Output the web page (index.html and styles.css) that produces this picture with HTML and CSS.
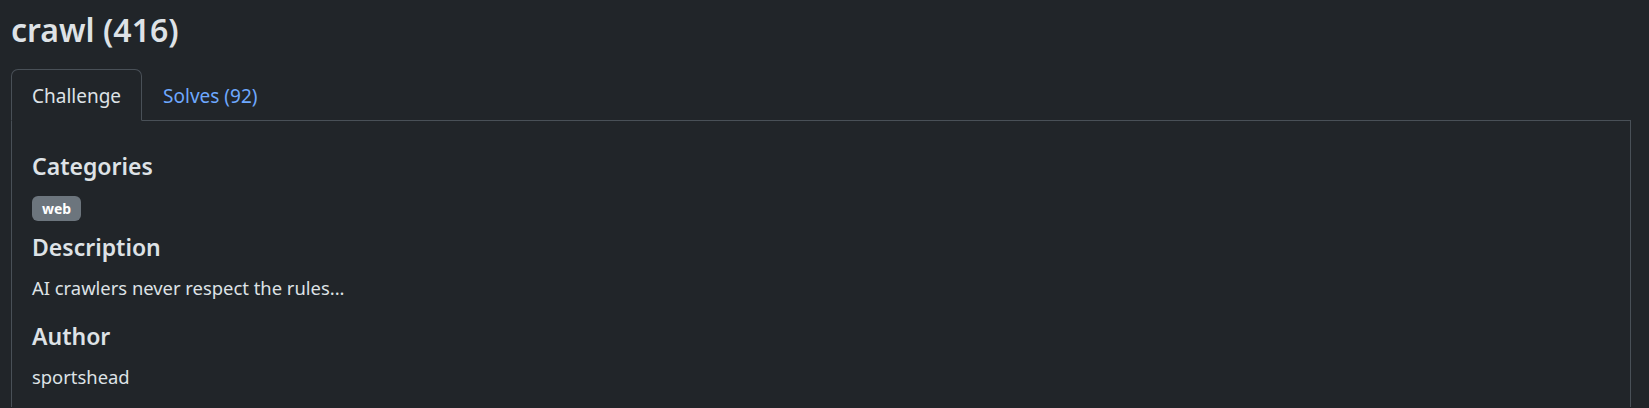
FILE: index.html
```html
<!DOCTYPE html>
<html lang="en">
<head>
<meta charset="utf-8">
<title>crawl</title>
<link rel="stylesheet" href="styles.css">
</head>
<body>
<div class="page">
  <h1 class="title">crawl (416)</h1>
  <ul class="tabs">
    <li class="tab active">Challenge</li>
    <li class="tab"><a href="#">Solves (92)</a></li>
  </ul>
  <div class="pane">
    <h5 class="heading">Categories</h5>
    <div class="badges"><span class="badge">web</span></div>
    <h5 class="heading">Description</h5>
    <p class="text">AI crawlers never respect the rules...</p>
    <h5 class="heading">Author</h5>
    <p class="text last">sportshead</p>
  </div>
</div>
</body>
</html>
```
FILE: styles.css
```css
html, body {
  margin: 0;
  background: #212529;
  color: #dee2e6;
  font-family: "Noto Sans", "Open Sans", sans-serif;
  font-size: 20px;
  line-height: 1.5;
}
.page {
  padding: 10px 18px 0 11px;
}
.title {
  margin: 0 0 20px;
  font-size: 32px;
  font-weight: 600;
  line-height: 39px;
}
.tabs {
  list-style: none;
  margin: 0;
  padding: 0;
  display: flex;
  border-bottom: 1px solid #495057;
}
.tab {
  padding: 12.4px 20px 9.1px;
  border: 1px solid transparent;
  border-top-left-radius: 7px;
  border-top-right-radius: 7px;
  margin-bottom: -1px;
  font-size: 19px;
  line-height: 28.5px;
}
.tab.active {
  border-color: #495057 #495057 #212529;
  background: #212529;
  color: #dee2e6;
}
.tab a {
  color: #6ea8fe;
  text-decoration: none;
}
.pane {
  border-left: 1px solid #495057;
  border-right: 1px solid #495057;
  padding: 32px 20px 16.5px;
}
.heading {
  margin: 0 0 12px;
  font-size: 23px;
  font-weight: 600;
  line-height: 27.6px;
}
.badges {
  display: flex;
  padding-top: 3.4px;
  margin: 0 0 13px;
}
.badge {
  display: block;
  background: #6c757d;
  color: #fff;
  font-size: 14px;
  font-weight: 700;
  line-height: 15px;
  padding: 5px 10px;
  border-radius: 6px;
}
.text {
  margin: 0 0 22.3px;
  font-size: 18.4px;
  line-height: 27.6px;
}
.text.last {
  margin-bottom: 0;
}
```
